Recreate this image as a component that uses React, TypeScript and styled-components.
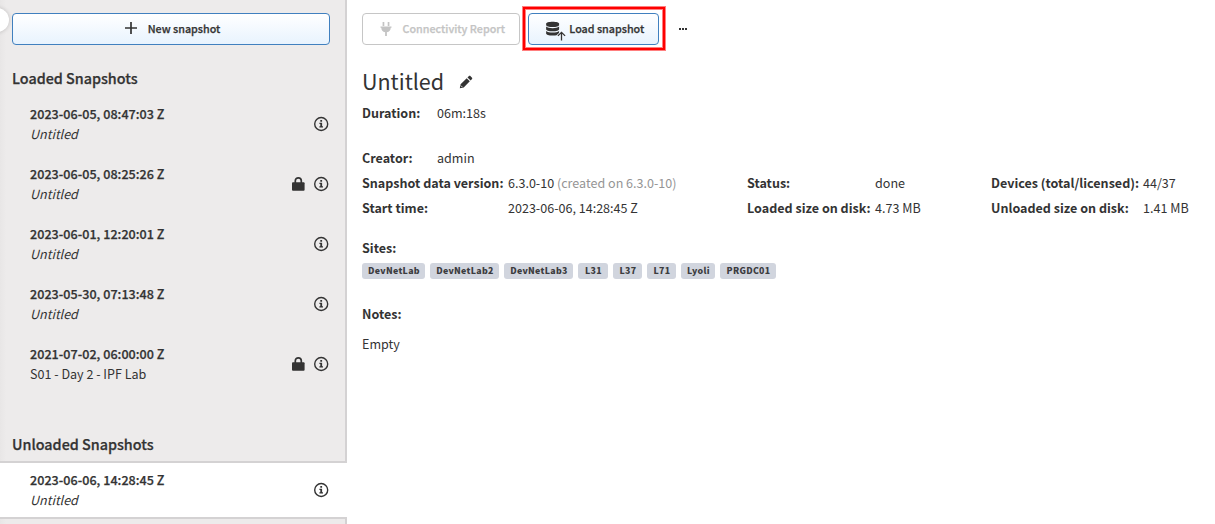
import React from 'react';
import styled, { createGlobalStyle, css } from 'styled-components';

const GlobalStyle = createGlobalStyle`
  *, *::before, *::after { box-sizing: border-box; }
  body {
    margin: 0;
    background: #fff;
    color: #333;
    font-family: "Source Sans Pro", "Noto Sans CJK SC", "Noto Sans", sans-serif;
    font-size: 12.55px;
    line-height: 20px;
    overflow: hidden;
  }
`;

const semiBold = css`
  font-weight: 500;
  letter-spacing: 0.04px;
  -webkit-text-stroke: 0.25px currentColor;
`;

const Page = styled.div`
  display: flex;
  height: 524px;
  white-space: nowrap;
`;

const Sidebar = styled.aside`
  position: relative;
  flex: none;
  width: 347px;
  background: linear-gradient(to right, #e8e6e6, #edebeb 6px);
  display: flex;
  flex-direction: column;
  overflow: hidden;
`;

const CollapseHandle = styled.div`
  position: absolute;
  left: -15px;
  top: 8px;
  width: 24px;
  height: 24px;
  border-radius: 50%;
  background: #fff;
  box-shadow: 0 0 4px rgba(0, 0, 0, 0.2);
`;

const Section = styled.section<{ $height: number }>`
  flex: none;
  height: ${p => p.$height}px;
  border-right: 2px solid #d4d2d3;
`;

const Button = styled.button<{ $width: number; $disabled?: boolean; $gap: number }>`
  display: flex;
  align-items: center;
  justify-content: center;
  gap: ${p => p.$gap}px;
  flex: none;
  width: ${p => p.$width}px;
  height: 32px;
  padding: 0 0 0 3px;
  border: 1px solid #4080bf;
  border-radius: 4px;
  background: linear-gradient(#fff, #e8f3fe);
  color: #333;
  font: inherit;
  font-size: 10.75px;
  ${semiBold}
  letter-spacing: 0;
  ${p => p.$disabled && css`
    border-color: #c6c6c6;
    background: #fff;
    color: #c4c4c4;
  `}
`;

const NewSnapshot = styled.div`
  padding: 13px 0 0 12px;
  height: 58px;
`;

const SectionTitle = styled.h2<{ $height: number }>`
  margin: 0;
  padding: 9px 0 0 12px;
  height: ${p => p.$height}px;
  font-size: 14.35px;
  line-height: 22px;
  ${semiBold}
  letter-spacing: 0;
`;

const Item = styled.div<{ $selected?: boolean }>`
  display: flex;
  align-items: center;
  height: ${p => (p.$selected ? 58 : 60)}px;
  padding: 0 ${p => (p.$selected ? 18 : 16)}px 0 30px;
  ${p => p.$selected && css`
    flex: none;
    background: #fff;
    border: solid #d4d2d3;
    border-width: 2px 0;
  `}
`;

const ItemText = styled.div`
  flex: 1;
`;

const ItemDate = styled.div`
  ${semiBold}
`;

const ItemName = styled.div<{ $italic?: boolean }>`
  font-style: ${p => (p.$italic ? 'italic' : 'normal')};
`;

const ItemIcons = styled.div`
  display: flex;
  align-items: center;
  gap: 8px;
  width: 39px;
  justify-content: flex-end;
  svg { display: block; }
`;

const Main = styled.main`
  flex: 1;
  padding: 13px 0 0 15px;
`;

const Toolbar = styled.div`
  display: flex;
  align-items: center;
  gap: 8px;
  height: 32px;
`;

const Highlighted = styled.div`
  position: relative;
  &::after {
    content: '';
    position: absolute;
    inset: -6px -6px -5px -5px;
    border: 2px solid #fe0000;
    box-shadow: 0 0 0 1px rgba(255, 0, 0, 0.5), inset 0 0 0 1px rgba(255, 0, 0, 0.5);
  }
`;

const MoreButton = styled.div`
  display: flex;
  gap: 1px;
  margin-left: 12px;
  i { width: 2px; height: 2px; background: #333; }
`;

const TitleRow = styled.div`
  display: flex;
  align-items: center;
  gap: 15px;
  margin-top: 20px;
  height: 34px;
`;

const Title = styled.h1`
  margin: -2px 0 0;
  font-size: 21.5px;
  line-height: 34px;
  font-weight: 400;
`;

const Facts = styled.dl<{ $columns: string; $top: number }>`
  display: grid;
  grid-template-columns: ${p => p.$columns};
  grid-auto-rows: 25px;
  align-items: center;
  margin: ${p => p.$top}px 0 0;
`;

const Term = styled.dt`
  font-weight: 700;
`;

const Value = styled.dd`
  margin: 0;
`;

const Muted = styled.span`
  color: #959595;
`;

const FieldTitle = styled.div<{ $top: number }>`
  margin-top: ${p => p.$top}px;
  font-weight: 700;
`;

const Tags = styled.div`
  display: flex;
  gap: 5px;
  margin-top: 5px;
`;

const Tag = styled.span<{ $width: number }>`
  width: ${p => p.$width}px;
  height: 16px;
  padding-left: 1px;
  border-radius: 3px;
  background: #d1d5de;
  color: #3c3c40;
  text-align: center;
  font: 900 8.8px/16px "Noto Sans CJK SC", sans-serif;
  letter-spacing: 0.3px;
`;

const Notes = styled.p`
  margin: 10px 0 0;
`;

const InfoIcon = () => (
  <svg width="16" height="16" viewBox="0 0 16 16">
    <circle cx="8.200" cy="8" r="6.500" fill="none" stroke="#333" strokeWidth="1.400" />
    <path d="M7.3 4.1h1.8v1.7H7.3zM6.4 6.7h2.7v3.5h.9v1.2H6.4v-1.2h.9V7.9h-.9z" fill="#333" />
  </svg>
);

const LockIcon = () => (
  <svg width="14" height="16" viewBox="0 0 14 16">
    <path d="M4.300 7V4.800a3 3 0 0 1 6 0V7" fill="none" stroke="#333" strokeWidth="1.700" />
    <rect x="1" y="6.200" width="12.600" height="8.600" rx="1" fill="#333" />
  </svg>
);

const PlusIcon = () => (
  <svg width="12" height="14" viewBox="0 0 12 14">
    <path d="M6 0v12M0 6h12" stroke="#333" strokeWidth="1.700" />
  </svg>
);

const PlugIcon = () => (
  <svg width="12" height="16" viewBox="0 0 12 16">
    <path d="M2.6 1h1.7v4H2.6zM7.7 1h1.7v4H7.7zM.5 5.4h11v1.3h-.8c0 2.5-1.4 4.1-3.8 4.6V15H5.100v-3.700C2.700 10.800 1.300 9.200 1.300 6.700H.5z" fill="#c4c4c4" />
  </svg>
);

const DatabaseIcon = () => (
  <svg width="20" height="24" viewBox="0 0 20 24">
    <g fill="#333" transform="translate(-.4 3.800) scale(1.080 1.020)">
      <path d="M.5 3c0-1.300 2.600-2 6-2s6 .7 6 2v1.200c0 1.200-2.600 2-6 2s-6-.8-6-2z" />
      <path d="M.5 5.700c1.200 1 3.400 1.500 6 1.500s4.800-.5 6-1.500v2.500c0 1.200-2.600 2-6 2s-6-.8-6-2z" />
      <path d="M.5 9.900c1.200 1 3.400 1.500 6 1.500s4.800-.5 6-1.500v2.600c0 1.200-2.600 2-6 2s-6-.8-6-2z" />
    </g>
    <path d="M15.500 23.500v-7.500M11.800 19 15.500 15.300l3.700 3.700" fill="none" stroke="#f3f9ff" strokeWidth="2.600" />
    <path d="M15.500 23.500v-8M11.900 18.900 15.500 15.300l3.600 3.600" fill="none" stroke="#333" strokeWidth="1.300" />
  </svg>
);

const PencilIcon = () => (
  <svg width="14" height="14" viewBox="0 0 14 14">
    <path d="M.8 13.200l.8-3.900 6.100-6.100 3.100 3.100-6.100 6.100zM8.500 2.400l1.200-1.200c.6-.6 1.300-.6 1.900 0l1.200 1.200c.6.6.6 1.300 0 1.900l-1.200 1.200z" fill="#333" />
    <path d="M1.900 10.600l1.500 1.500" stroke="#fff" strokeWidth=".8" />
  </svg>
);

const loaded = [
  { date: '2023-06-05, 08:47:03 Z' },
  { date: '2023-06-05, 08:25:26 Z', locked: true },
  { date: '2023-06-01, 12:20:01 Z' },
  { date: '2023-05-30, 07:13:48 Z' },
  { date: '2021-07-02, 06:00:00 Z', name: 'S01 - Day 2 - IPF Lab', locked: true },
];

const sites: [string, number][] = [
  ['DevNetLab', 63], ['DevNetLab2', 69], ['DevNetLab3', 69], ['L31', 30],
  ['L37', 29], ['L71', 29], ['Lyoli', 34], ['PRGDC01', 56],
];

type SnapshotProps = { date: string; name?: string; locked?: boolean; selected?: boolean };

const Snapshot = ({ date, name, locked, selected }: SnapshotProps) => (
  <Item $selected={selected}>
    <ItemText>
      <ItemDate>{date}</ItemDate>
      <ItemName $italic={!name}>{name ?? 'Untitled'}</ItemName>
    </ItemText>
    <ItemIcons>
      {locked && <LockIcon />}
      <InfoIcon />
    </ItemIcons>
  </Item>
);

export default function App() {
  return (
    <Page>
      <GlobalStyle />
      <Sidebar>
        <CollapseHandle />
        <Section $height={424}>
          <NewSnapshot>
            <Button $width={318} $gap={11}>
              <PlusIcon />
              <span>New snapshot</span>
            </Button>
          </NewSnapshot>
          <SectionTitle $height={36}>Loaded Snapshots</SectionTitle>
          {loaded.map(s => <Snapshot key={s.date} {...s} />)}
        </Section>
        <Section $height={37}>
          <SectionTitle $height={37}>Unloaded Snapshots</SectionTitle>
        </Section>
        <Snapshot date="2023-06-06, 14:28:45 Z" selected />
        <Section $height={5} />
      </Sidebar>
      <Main>
        <Toolbar>
          <Button $width={158} $gap={10.5} $disabled>
            <PlugIcon />
            <span>Connectivity Report</span>
          </Button>
          <Highlighted>
            <Button $width={131} $gap={3.5}>
              <DatabaseIcon />
              <span>Load snapshot</span>
            </Button>
          </Highlighted>
          <MoreButton><i /><i /><i /></MoreButton>
        </Toolbar>
        <TitleRow>
          <Title>Untitled</Title>
          <PencilIcon />
        </TitleRow>
        <Facts $columns="75px 1fr" $top={1}>
          <Term>Duration:</Term>
          <Value>06m:18s</Value>
        </Facts>
        <Facts $columns="75px 1fr" $top={20}>
          <Term>Creator:</Term>
          <Value>admin</Value>
        </Facts>
        <Facts $columns="146px 239px 128px 116px 152px 1fr" $top={0}>
          <Term>Snapshot data version:</Term>
          <Value>6.3.0-10 <Muted>(created on 6.3.0-10)</Muted></Value>
          <Term>Status:</Term>
          <Value>done</Value>
          <Term>Devices (total/licensed):</Term>
          <Value>44/37</Value>
          <Term>Start time:</Term>
          <Value>2023-06-06, 14:28:45 Z</Value>
          <Term>Loaded size on disk:</Term>
          <Value>4.73 MB</Value>
          <Term>Unloaded size on disk:</Term>
          <Value>1.41 MB</Value>
        </Facts>
        <FieldTitle $top={18}>Sites:</FieldTitle>
        <Tags>
          {sites.map(([name, width]) => <Tag key={name} $width={width}>{name}</Tag>)}
        </Tags>
        <FieldTitle $top={25}>Notes:</FieldTitle>
        <Notes>Empty</Notes>
      </Main>
    </Page>
  );
}
